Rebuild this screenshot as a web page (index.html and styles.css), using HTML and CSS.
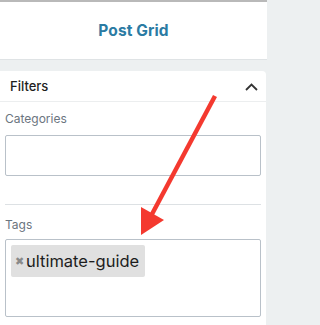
FILE: index.html
```html
<!DOCTYPE html>
<html>
<head>
<meta charset="utf-8">
<link rel="stylesheet" href="styles.css">
</head>
<body>
<header class="top">
  <h1 class="title">Post Grid</h1>
</header>
<div class="band">
  <section class="card">
    <div class="card-head">
      <span class="card-title">Filters</span>
      <svg class="chev" width="13" height="8" viewBox="0 0 13 8"><path d="M1 7 L6.5 1.5 L12 7" fill="none" stroke="#333" stroke-width="1.8"/></svg>
    </div>
    <div class="card-body">
      <div class="field">
        <div class="label">Categories</div>
        <div class="box box-cat"></div>
      </div>
      <div class="divider"></div>
      <div class="field">
        <div class="label">Tags</div>
        <div class="box box-tags">
          <span class="chip"><span class="chip-x">✖</span>ultimate-guide</span>
        </div>
      </div>
    </div>
  </section>
</div>
<svg class="arrow" width="267" height="325" viewBox="0 0 267 325">
  <line x1="215" y1="96" x2="151" y2="216" stroke="#f4392f" stroke-width="4.5"/>
  <polygon points="141,207 164,220 141,235" fill="#f4392f"/>
</svg>
</body>
</html>
```
FILE: styles.css
```css
* { box-sizing: border-box; }
html, body { margin: 0; padding: 0; }
body {
  width: 267px;
  height: 325px;
  overflow: hidden;
  background: #edf0f1;
  font-family: Inter, "Liberation Sans", Arial, sans-serif;
  position: relative;
}
.top {
  height: 60px;
  background: #fff;
  border-top: 2px solid #b9b9b9;
  border-bottom: 1px solid #dfe3e5;
  display: flex;
  align-items: center;
  justify-content: center;
}
.title {
  margin: 0;
  font-size: 15.5px;
  font-weight: 700;
  color: #2b7ba3;
  letter-spacing: 0.1px;
  padding-bottom: 1px;
}
.band {
  padding-top: 11px;
  padding-right: 1px;
}
.card {
  background: #fff;
  border-top-right-radius: 4px;
  height: 260px;
}
.card-head {
  height: 31px;
  border-bottom: 1px solid #eceeef;
  display: flex;
  align-items: center;
  justify-content: space-between;
  padding: 0 8px 0 10px;
}
.card-title {
  font-size: 13px;
  font-weight: 500;
  color: #1e1e1e;
}
.chev { margin-top: 1px; }
.card-body {
  padding: 0 5px;
}
.label {
  font-size: 12px;
  color: #6b7580;
  line-height: 14px;
}
.field:first-child .label { padding-top: 10px; padding-bottom: 9px; }
.box {
  border: 1px solid #b9c1c9;
  border-radius: 2px;
  background: #fff;
}
.box-cat { height: 41px; }
.divider {
  border-top: 1px solid #dde1e4;
  margin-top: 28px;
}
.field:last-child .label { padding-top: 13px; padding-bottom: 7px; }
.box-tags {
  height: 78px;
  padding: 5px;
}
.chip {
  display: inline-flex;
  align-items: center;
  height: 32px;
  padding: 0 6px 0 4px;
  background: #e0e0e0;
  border-radius: 2px;
  font-size: 16.5px;
  color: #1d1d1d;
}
.chip-x {
  font-size: 11px;
  color: #8a8a8a;
  margin-right: 2px;
}
.arrow {
  position: absolute;
  left: 0;
  top: 0;
  pointer-events: none;
}
```
